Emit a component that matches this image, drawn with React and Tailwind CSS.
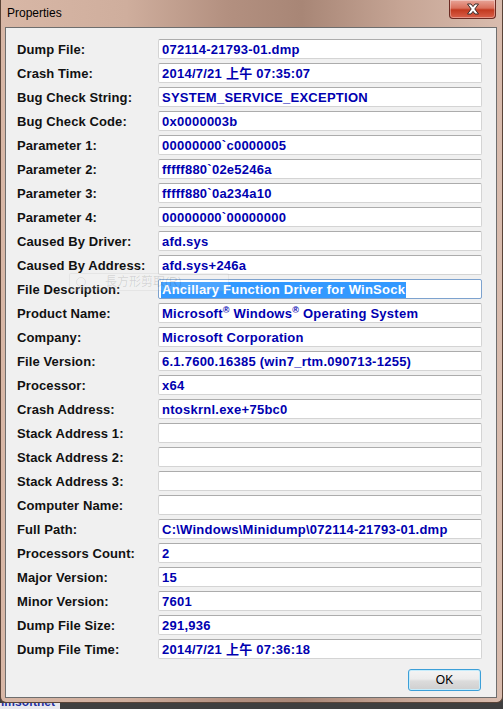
import React from 'react';

const rows = [
  ['Dump File:', '072114-21793-01.dmp'],
  ['Crash Time:', '2014/7/21 上午 07:35:07'],
  ['Bug Check String:', 'SYSTEM_SERVICE_EXCEPTION'],
  ['Bug Check Code:', '0x0000003b'],
  ['Parameter 1:', '00000000`c0000005'],
  ['Parameter 2:', 'fffff880`02e5246a'],
  ['Parameter 3:', 'fffff880`0a234a10'],
  ['Parameter 4:', '00000000`00000000'],
  ['Caused By Driver:', 'afd.sys'],
  ['Caused By Address:', 'afd.sys+246a'],
  ['File Description:', 'Ancillary Function Driver for WinSock', 'selected'],
  ['Product Name:', 'product'],
  ['Company:', 'Microsoft Corporation'],
  ['File Version:', '6.1.7600.16385 (win7_rtm.090713-1255)'],
  ['Processor:', 'x64'],
  ['Crash Address:', 'ntoskrnl.exe+75bc0'],
  ['Stack Address 1:', ''],
  ['Stack Address 2:', ''],
  ['Stack Address 3:', ''],
  ['Computer Name:', ''],
  ['Full Path:', 'C:\\Windows\\Minidump\\072114-21793-01.dmp'],
  ['Processors Count:', '2'],
  ['Major Version:', '15'],
  ['Minor Version:', '7601'],
  ['Dump File Size:', '291,936'],
  ['Dump File Time:', '2014/7/21 上午 07:36:18'],
];

function Value({ value, kind }) {
  if (kind === 'selected') {
    return (
      <span className="inline-block h-4 bg-[#3399ff] pl-[1px] pr-[1px] leading-4 text-white">{value}</span>
    );
  }
  if (value === 'product') {
    return (
      <span>
        Microsoft<sup className="text-[9px]">®</sup> Windows<sup className="text-[9px]">®</sup> Operating System
      </span>
    );
  }
  return <span>{value}</span>;
}

function CloseButton() {
  return (
    <div className="absolute right-[6px] top-0 flex h-[19px] w-[47px] items-center justify-center rounded-b-[4px] border border-t-0 border-[#6b2a22] bg-[linear-gradient(to_bottom,#e8a598_0%,#d9705c_45%,#c2391f_55%,#d9604a_100%)] shadow-[inset_0_0_0_1px_rgba(255,255,255,0.35)]">
      <svg width="14" height="12" viewBox="0 0 14 12">
        <path
          d="M1.5 1 H5 L7 3.6 L9 1 H12.5 L8.8 6 L12.5 11 H9 L7 8.4 L5 11 H1.5 L5.2 6 Z"
          fill="#ffffff"
          stroke="#3a2a28"
          strokeWidth="1"
          strokeLinejoin="round"
        />
      </svg>
    </div>
  );
}

export default function App() {
  return (
    <div className="h-[709px] w-[503px] overflow-hidden bg-[#3f3f3f] font-['Liberation_Sans','Noto_Sans_CJK_TC',sans-serif]">
      <div className="relative h-[703px] w-[503px] rounded-b-[6px] border border-t-0 border-[#5a4438] bg-[linear-gradient(to_right,#d8b7a6_0%,#cfae9d_25%,#b39080_45%,#a88676_60%,#c6a595_80%,#d9bcae_100%)]">
        {/* title bar */}
        <div className="relative h-[27px]">
          <div className="absolute left-[6px] top-[6px] text-[12px] leading-[14px] text-black">Properties</div>
          <CloseButton />
        </div>

        {/* client area */}
        <div className="relative ml-[4px] h-[671px] w-[492px] border border-[#6e6e6e] bg-[#f0f0f0] pl-[11px] pt-[11px]">
          <div className="grid grid-cols-[141px_324px] gap-y-1">
            {rows.map(([label, value, kind]) => (
              <React.Fragment key={label}>
                <div className="flex h-5 items-center pt-[1px] text-[13px] font-bold tracking-[0.1px] text-[#111]">{label}</div>
                <div
                  className={
                    kind === 'selected'
                      ? 'flex h-5 items-center rounded-[2px] border border-[#7da2ce] bg-white pl-[2px] pt-[1px] text-[13px] font-bold tracking-[0.25px] text-[#0000b0] whitespace-nowrap'
                      : 'flex h-5 items-center rounded-[2px] border border-[#d4d4d4] border-t-[#acacac] bg-white pl-[3px] pt-[1px] text-[13px] font-bold tracking-[0.25px] text-[#0000b0] whitespace-nowrap'
                  }
                >
                  <Value value={value} kind={kind} />
                </div>
              </React.Fragment>
            ))}
          </div>

          <div className="mt-[10px] flex justify-end pr-[15px]">
            <button className="h-[22px] w-[73px] rounded-[3px] border border-[#3c9fd8] bg-[linear-gradient(to_bottom,#f4f4f4_0%,#ececec_45%,#dcdcdc_55%,#cfcfcf_100%)] text-[12px] leading-[20px] text-black shadow-[inset_0_0_0_1px_#c6ecfb]">
              OK
            </button>
          </div>

          {/* faded context menu ghost */}
          <div className="pointer-events-none absolute left-[63px] top-[245px] flex h-[18px] w-[160px] items-center rounded-[2px] border border-[rgba(0,0,0,0.05)] bg-[rgba(255,255,255,0.12)]">
            <div className="ml-[6px] h-[10px] w-[10px] rounded-full border border-[rgba(0,0,0,0.07)]"></div>
            <span className="ml-[19px] text-[12px] text-[rgba(0,0,0,0.13)]">長方形剪取(R)</span>
          </div>
        </div>
      </div>
      <div className="h-[6px] w-[60px] overflow-hidden bg-[#e8e8ee]">
        <div className="-mt-[7px] pl-[1px] text-[12px] font-bold leading-[12px] text-[#1d2fa0]">imsoftnet</div>
      </div>
    </div>
  );
}
